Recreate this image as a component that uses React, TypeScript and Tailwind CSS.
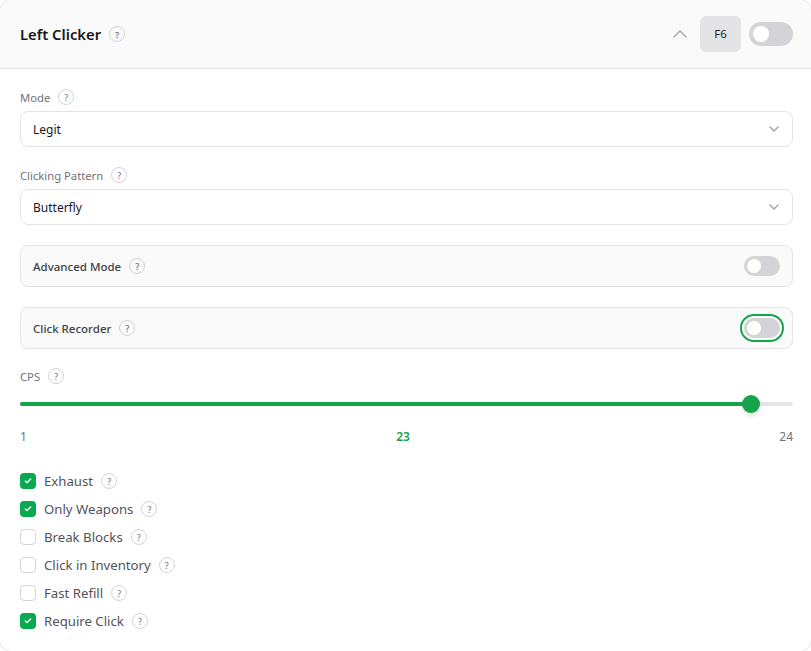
import React from "react";
import { ChevronDown, ChevronUp, Check } from "lucide-react";

const Help = ({ className = "" }: { className?: string }) => (
  <span className={"flex h-4 w-4 shrink-0 items-center justify-center rounded-full border border-[#d4d4d8] text-[9px] leading-none text-[#71717a] " + className}>?</span>
);

const Toggle = ({ focus = false }: { focus?: boolean }) => (
  <span className={"flex h-5 w-9 items-center rounded-full bg-[#d4d4d8] p-0.5 " + (focus ? "outline-2 outline-offset-2 outline-[#16a34a]" : "")}>
    <span className="h-3.5 w-3.5 translate-x-[1px] rounded-full bg-white" />
  </span>
);

const Select = ({ label, value }: { label: string; value: string }) => (
  <div className="flex flex-col">
    <div className="flex h-[22px] items-center gap-2 text-[11.25px] text-[#71717a]">
      <span className="translate-y-[1px]">{label}</span>
      <Help />
    </div>
    <div className="mt-[3px] flex h-9 items-center justify-between rounded-lg border border-[#e4e4e7] bg-white pl-3 pr-[10px] text-xs text-[#18181b]">
      <span className="translate-y-[1px]">{value}</span>
      <ChevronDown className="h-4 w-4 text-[#a1a1aa]" strokeWidth={2} />
    </div>
  </div>
);

const Row = ({ label, focus }: { label: string; focus?: boolean }) => (
  <div className="flex h-[42px] items-center justify-between rounded-lg border border-[#e4e4e7] bg-[#fafafa] pl-3 pr-3">
    <div className="flex items-center gap-2 text-[11.5px] font-medium text-[#3f3f46]">
      <span className="translate-y-[1px]">{label}</span>
      <Help />
    </div>
    <Toggle focus={focus} />
  </div>
);

const Item = ({ label, on }: { label: string; on?: boolean }) => (
  <div className="flex h-7 items-center">
    {on ? (
      <span className="flex h-4 w-4 items-center justify-center rounded bg-[#0aa84f]">
        <Check className="h-2 w-2 text-white" strokeWidth={4} />
      </span>
    ) : (
      <span className="h-4 w-4 rounded border border-[#d4d4d8] bg-white" />
    )}
    <span className="ml-2 translate-y-[1px] text-[13.2px] text-[#52525b]">{label}</span>
    <Help className="ml-2" />
  </div>
);

export default function App() {
  return (
    <div className="h-[651px] w-[811px] overflow-hidden bg-white font-['Noto_Sans','Open_Sans',sans-serif]">
      <div className="-m-px h-[653px] w-[813px] overflow-hidden rounded-xl border border-[#e4e4e7] bg-white">
        <div className="flex h-[69px] items-center justify-between border-b border-[#e4e4e7] bg-[#fafafa] pl-5 pr-[18px]">
          <div className="flex items-center gap-2 text-[14.8px] font-semibold text-[#18181b]">
            Left Clicker
            <Help />
          </div>
          <div className="flex items-center gap-2">
            <ChevronUp className="h-6 w-6 text-[#a1a1aa]" strokeWidth={1.25} />
            <span className="flex h-9 w-[41px] items-center justify-center rounded-md bg-[#e4e4e7] text-[11.5px] text-[#27272a]">F6</span>
            <span className="flex h-6 w-11 items-center rounded-full bg-[#d4d4d8] p-0.5">
              <span className="h-4 w-4 translate-x-[2px] rounded-full bg-white" />
            </span>
          </div>
        </div>
        <div className="flex flex-col pl-5 pr-[18px] pt-[17px]">
          <Select label="Mode" value="Legit" />
          <div className="mt-[17px]">
            <Select label="Clicking Pattern" value="Butterfly" />
          </div>
          <div className="mt-5">
            <Row label="Advanced Mode" />
          </div>
          <div className="mt-5">
            <Row label="Click Recorder" focus />
          </div>
          <div className="mt-4 flex h-[22px] items-center gap-2 text-[11.25px] text-[#71717a]">
            <span className="translate-y-[1px]">CPS</span>
            <Help />
          </div>
          <div className="relative mt-[15px] h-1 rounded-full bg-[#e4e4e7]">
            <div className="h-full w-[94.6%] rounded-full bg-[#16a34a]" />
            <span className="absolute left-[722px] top-[-7px] h-[18px] w-[18px] rounded-full bg-[#16a34a] shadow-md" />
          </div>
          <div className="mt-[23px] flex items-center justify-between text-xs text-[#71717a]">
            <span>1</span>
            <span className="font-semibold text-[#16a34a]">23</span>
            <span>24</span>
          </div>
          <div className="mt-[22px] flex flex-col">
            <Item label="Exhaust" on />
            <Item label="Only Weapons" on />
            <Item label="Break Blocks" />
            <Item label="Click in Inventory" />
            <Item label="Fast Refill" />
            <Item label="Require Click" on />
          </div>
        </div>
      </div>
    </div>
  );
}
